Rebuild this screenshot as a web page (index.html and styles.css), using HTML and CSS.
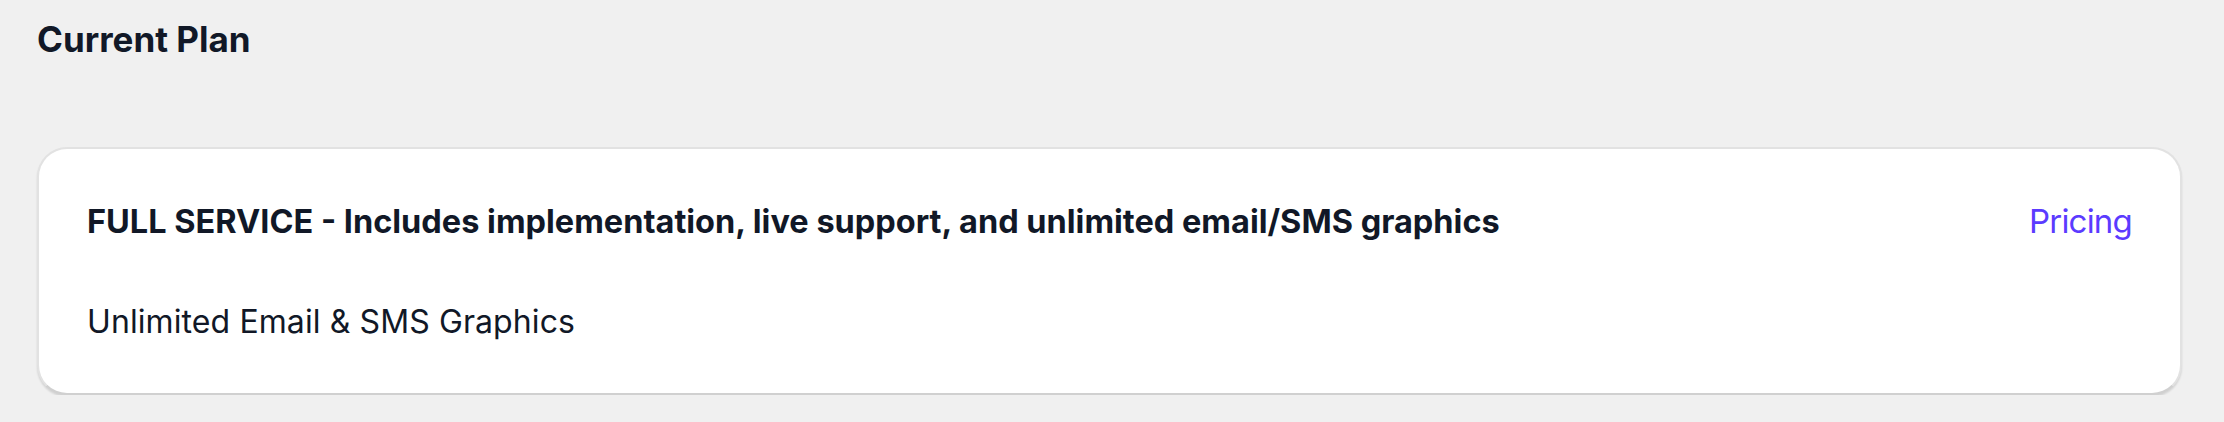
FILE: index.html
```html
<!DOCTYPE html>
<html lang="en">
<head>
<meta charset="utf-8">
<title>Current Plan</title>
<link rel="stylesheet" href="styles.css">
</head>
<body>
<main class="page">
  <h1 class="page-title">Current Plan</h1>
  <section class="plan-card">
    <div class="plan-head">
      <h2 class="plan-name">FULL SERVICE - Includes implementation, live support, and unlimited email/SMS graphics</h2>
      <a class="plan-link" href="#">Pricing</a>
    </div>
    <p class="plan-desc">Unlimited Email &amp; SMS Graphics</p>
  </section>
</main>
</body>
</html>
```
FILE: styles.css
```css
html, body {
  margin: 0;
  padding: 0;
  background: #f0f0f0;
}
body {
  font-family: Inter, "Noto Sans", sans-serif;
  color: #111827;
}
.page {
  padding: 18px 42px 0 37px;
}
.page-title {
  margin: 0;
  font-size: 35px;
  font-weight: 700;
  line-height: 43px;
  color: #111827;
}
.plan-card {
  margin-top: 86px;
  background: #fff;
  border: 2px solid #e2e2e2;
  border-bottom-color: #d0d0d0;
  border-radius: 30px;
  box-shadow: 0 2px 2px rgba(0,0,0,0.12);
  padding: 52px 48px 52px 48px;
}
.plan-head {
  display: flex;
  justify-content: space-between;
  align-items: baseline;
}
.plan-name {
  margin: 0;
  font-size: 32.5px;
  font-weight: 700;
  line-height: 40px;
  color: #111827;
}
.plan-link {
  font-size: 33px;
  letter-spacing: -0.8px;
  color: #5b3bff;
  text-decoration: none;
  line-height: 40px;
}
.plan-desc {
  margin: 60px 0 0 0;
  font-size: 32px;
  letter-spacing: 0.1px;
  line-height: 39px;
  color: #111827;
}
```
